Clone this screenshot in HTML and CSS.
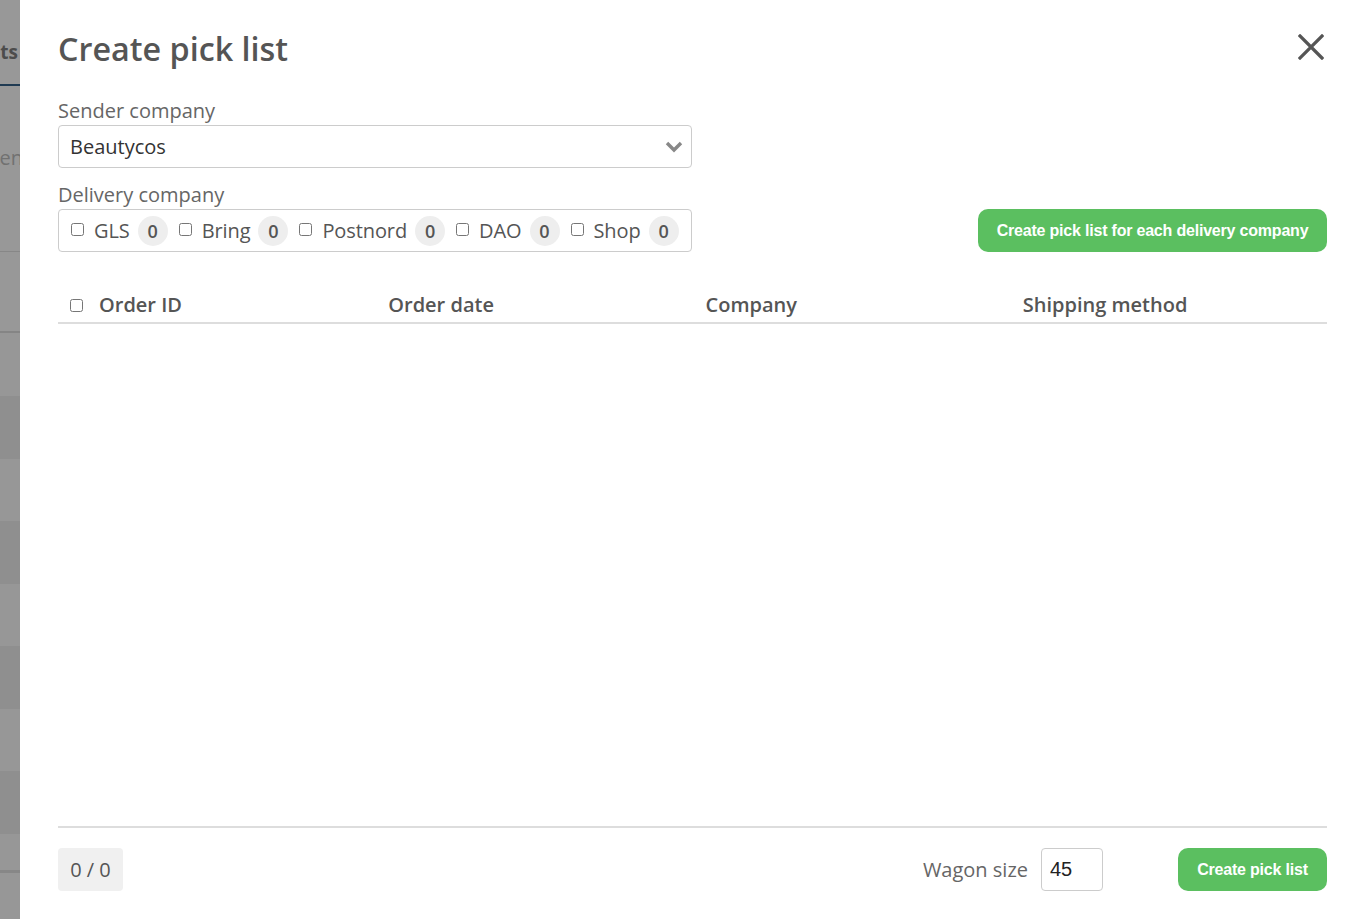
FILE: index.html
```html
<!DOCTYPE html>
<html>
<head>
<meta charset="utf-8">
<link rel="stylesheet" href="styles.css">
</head>
<body>
<div class="page">
  <div class="backdrop">
    <div class="bd-tab"><span class="bd-tab-text">Shipments</span></div>
    <div class="bd-filter"><span class="bd-filter-text">Open</span></div>
    <div class="bd-gap"></div>
    <div class="bd-row light"></div>
    <div class="bd-row dark"></div>
    <div class="bd-row light short"></div>
    <div class="bd-row dark"></div>
    <div class="bd-row light short"></div>
    <div class="bd-row dark"></div>
    <div class="bd-row light short"></div>
    <div class="bd-row dark"></div>
    <div class="bd-row light last"></div>
    <div class="bd-rest"></div>
  </div>

  <div class="modal">
    <div class="modal-header">
      <h1 class="title">Create pick list</h1>
      <button class="close" aria-label="Close">
        <svg width="26" height="26" viewBox="0 0 26 26"><path d="M2 2 L24 24 M24 2 L2 24" stroke="#555" stroke-width="3.2" stroke-linecap="square"/></svg>
      </button>
    </div>

    <div class="field-label">Sender company</div>
    <div class="select">
      <span>Beautycos</span>
      <svg class="chevron" width="18" height="12" viewBox="0 0 18 12"><path d="M2 2 L9 9 L16 2" fill="none" stroke="#888" stroke-width="3.4"/></svg>
    </div>

    <div class="field-label second">Delivery company</div>
    <div class="delivery-row">
      <div class="delivery-box">
        <label class="opt"><input type="checkbox"><span class="opt-name">GLS</span><span class="badge">0</span></label>
        <label class="opt"><input type="checkbox"><span class="opt-name">Bring</span><span class="badge">0</span></label>
        <label class="opt"><input type="checkbox"><span class="opt-name">Postnord</span><span class="badge">0</span></label>
        <label class="opt"><input type="checkbox"><span class="opt-name">DAO</span><span class="badge">0</span></label>
        <label class="opt"><input type="checkbox"><span class="opt-name">Shop</span><span class="badge">0</span></label>
      </div>
      <button class="btn-green wide">Create pick list for each delivery company</button>
    </div>

    <div class="table">
      <div class="thead">
        <div class="th first"><input type="checkbox"><span>Order ID</span></div>
        <div class="th">Order date</div>
        <div class="th">Company</div>
        <div class="th">Shipping method</div>
      </div>
      <div class="tbody"></div>
    </div>

    <div class="footer">
      <div class="counter">0 / 0</div>
      <div class="footer-right">
        <span class="wagon-label">Wagon size</span>
        <input class="wagon-input" type="text" value="45">
        <button class="btn-green small">Create pick list</button>
      </div>
    </div>
  </div>
</div>
</body>
</html>
```

FILE: styles.css
```css
html, body {
  margin: 0;
  padding: 0;
  height: 100%;
  overflow: hidden;
}
body {
  font-family: "Open Sans", "Liberation Sans", sans-serif;
  color: #555;
  background: #fff;
}
.page {
  display: flex;
  height: 919px;
}

/* faded page behind the modal */
.backdrop {
  width: 20px;
  flex: none;
  background: #989898;
  display: flex;
  flex-direction: column;
  overflow: hidden;
}
.bd-tab {
  height: 84px;
  border-bottom: 2px solid #1f3a52;
  display: flex;
  justify-content: flex-end;
  align-items: flex-start;
  overflow: hidden;
}
.bd-tab-text {
  white-space: nowrap;
  font-size: 19px;
  font-weight: 700;
  color: #4c4c4c;
  margin-top: 39px;
  margin-right: 2px;
  line-height: 26px;
}
.bd-filter {
  height: 165px;
  border-bottom: 1px solid #878787;
  display: flex;
  justify-content: flex-end;
  overflow: hidden;
}
.bd-filter-text {
  white-space: nowrap;
  font-size: 20px;
  color: #717171;
  margin-top: 59px;
  margin-right: -3px;
  line-height: 26px;
}
.bd-gap {
  height: 79px;
  border-bottom: 2px solid #858585;
}
.bd-row {
  height: 63px;
  flex: none;
}
.bd-row.short { height: 62px; }
.bd-row.light { background: #979797; }
.bd-row.dark { background: #8f8f8f; }
.bd-row.last {
  height: 36px;
  border-bottom: 3px solid #878787;
}
.bd-rest {
  flex: 1;
  background: #979797;
}

/* modal */
.modal {
  flex: 1;
  background: #fff;
  padding: 24px 36px 0 38px;
  display: flex;
  flex-direction: column;
  box-sizing: border-box;
  height: 919px;
}
.modal-header {
  display: flex;
  justify-content: space-between;
  align-items: center;
  height: 48px;
  margin-bottom: 25px;
}
.title {
  margin: 0;
  font-size: 32.3px;
  font-weight: 600;
  color: #555;
  line-height: 48px;
}
.close {
  border: 0;
  background: none;
  padding: 0;
  width: 26px;
  height: 26px;
  margin-right: 3px;
  margin-top: -2px;
  display: flex;
}
.field-label {
  font-size: 20px;
  line-height: 28px;
  color: #666;
}
.field-label.second {
  margin-top: 13px;
}
.select {
  width: 634px;
  height: 43px;
  box-sizing: border-box;
  border: 1px solid #ccc;
  border-radius: 4px;
  display: flex;
  align-items: center;
  justify-content: space-between;
  padding: 0 8px 0 11px;
  font-size: 20px;
  color: #333;
}
.chevron {
  margin-top: 1px;
}
.delivery-row {
  display: flex;
  align-items: center;
  justify-content: space-between;
}
.delivery-box {
  width: 634px;
  height: 43px;
  box-sizing: border-box;
  border: 1px solid #ccc;
  border-radius: 4px;
  display: flex;
  align-items: center;
  padding: 0 0 0 12px;
  gap: 11px;
}
.opt {
  display: flex;
  align-items: center;
  font-size: 20px;
  color: #555;
}
.opt input {
  margin: 0 10px 0 0;
  width: 13px;
  height: 13px;
  position: relative;
  top: -1px;
}
.opt-name {
  line-height: 28px;
  margin-top: 1px;
  letter-spacing: -0.1px;
}
.badge {
  margin-left: 8px;
  width: 30px;
  height: 30px;
  border-radius: 50%;
  background: #eee;
  display: flex;
  align-items: center;
  justify-content: center;
  font-size: 18px;
  font-weight: 600;
  color: #555;
}
.btn-green {
  border: 0;
  background: #5bbf60;
  color: #fff;
  font-family: "Liberation Sans", Arial, sans-serif;
  font-weight: 700;
  border-radius: 10px;
  letter-spacing: -0.2px;
}
.btn-green.wide {
  width: 349px;
  height: 43px;
  font-size: 16px;
  padding: 0;
}
.btn-green.small {
  width: 149px;
  height: 43px;
  font-size: 16px;
  padding: 0;
}

/* table */
.table {
  margin-top: 36px;
  flex: 1;
  display: flex;
  flex-direction: column;
  border-bottom: 2px solid #ddd;
}
.thead {
  display: grid;
  grid-template-columns: repeat(4, 1fr);
  border-bottom: 2px solid #ddd;
  height: 34px;
}
.th {
  padding: 0 13px;
  font-size: 20px;
  font-weight: 600;
  color: #555;
  line-height: 34px;
  display: flex;
  align-items: center;
}
.th.first {
  padding-left: 12px;
}
.th.first input {
  margin: 0 16px 0 0;
  width: 13px;
  height: 13px;
}
.tbody {
  flex: 1;
}

/* footer */
.footer {
  display: flex;
  justify-content: space-between;
  align-items: center;
  padding: 20px 0 28px;
}
.counter {
  width: 65px;
  height: 43px;
  box-sizing: border-box;
  background: #f0f0f0;
  border-radius: 4px;
  display: flex;
  align-items: center;
  justify-content: center;
  font-size: 20px;
  color: #555;
}
.footer-right {
  display: flex;
  align-items: center;
}
.wagon-label {
  font-size: 20px;
  color: #666;
  margin-right: 13px;
}
.wagon-input {
  width: 62px;
  height: 43px;
  box-sizing: border-box;
  border: 1px solid #ccc;
  border-radius: 4px;
  font-family: "Liberation Sans", Arial, sans-serif;
  font-size: 20px;
  color: #222;
  padding: 0 8px;
  margin-right: 75px;
  outline: none;
}
```
